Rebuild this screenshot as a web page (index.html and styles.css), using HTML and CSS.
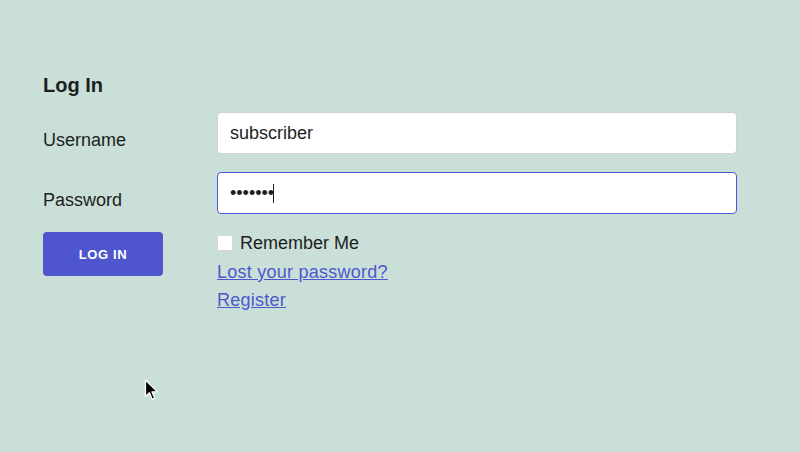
FILE: index.html
```html
<!DOCTYPE html>
<html lang="en">
<head>
    <meta charset="UTF-8">
    <meta name="viewport" content="width=device-width, initial-scale=1.0">
    <title>Log In</title>
    <link rel="stylesheet" href="styles.css">
</head>
<body>
    <div class="page">
        <h2 class="title">Log In</h2>
        <form class="login" onsubmit="event.preventDefault();">
            <label for="user" class="field-label">Username</label>
            <input type="text" id="user" class="field" value="subscriber">

            <label for="pass" class="field-label">Password</label>
            <div class="field-wrap">
                <input type="password" id="pass" class="field field-focus" value="1234567">
                <span class="caret"></span>
            </div>

            <div>
                <button type="submit" class="btn">LOG IN</button>
            </div>
            <div class="extras">
                <label class="remember"><input type="checkbox" class="check"> Remember Me</label>
                <div class="links">
                    <a href="#">Lost your password?</a><br>
                    <a href="#">Register</a>
                </div>
            </div>
        </form>

        <!-- mouse pointer -->
        <svg class="pointer" width="16" height="24" viewBox="0 0 14 22">
            <path d="M1 1 L1 16 L4.6 12.6 L7.2 18.6 L9.6 17.6 L7 11.8 L12 11.8 Z" fill="#000" stroke="#fff" stroke-width="1.2" stroke-linejoin="round"/>
        </svg>
    </div>
</body>
</html>
```

FILE: styles.css
```css
body {
    margin: 0;
    background-color: #c9dfd7;
    font-family: "Liberation Sans", Arial, sans-serif;
    color: #1e1e1e;
}

.page {
    position: relative;
    height: 452px;
    padding: 73px 63px 0 43px;
    box-sizing: border-box;
}

.title {
    margin: 0 0 15px;
    font-size: 20px;
    line-height: 24px;
    font-weight: bold;
}

.login {
    display: grid;
    grid-template-columns: 174px 1fr;
    row-gap: 18px;
}

.field-label {
    font-size: 18px;
    line-height: 27px;
    padding-top: 15px;
}

.field {
    width: 100%;
    height: 42px;
    box-sizing: border-box;
    padding: 0 12px;
    font-family: "Liberation Sans", Arial, sans-serif;
    font-size: 18px;
    color: #1e1e1e;
    background-color: #fff;
    border: 1px solid #cfd2d1;
    border-radius: 4px;
    outline: none;
}

.field-focus {
    border-color: #4f57d4;
}

.field-wrap {
    position: relative;
}

.caret {
    position: absolute;
    left: 56px;
    top: 12px;
    width: 1px;
    height: 19px;
    background-color: #1e1e1e;
}

.btn {
    width: 120px;
    height: 44px;
    border: none;
    border-radius: 4px;
    background-color: #4e55cd;
    color: #fff;
    font-family: "Liberation Sans", Arial, sans-serif;
    font-size: 13px;
    font-weight: bold;
    letter-spacing: 0.6px;
    cursor: pointer;
}

.extras {
    font-size: 18px;
}

.remember {
    display: flex;
    align-items: center;
    height: 22px;
}

.check {
    appearance: none;
    width: 16px;
    height: 16px;
    margin: 0 7px 0 0;
    background-color: #fff;
    border: 1px solid #d6d8d7;
}

.links {
    margin-top: 4px;
    line-height: 28px;
}

.links a {
    color: #4f57cf;
    letter-spacing: 0.25px;
}

.pointer {
    position: absolute;
    left: 144px;
    top: 379px;
}
```
